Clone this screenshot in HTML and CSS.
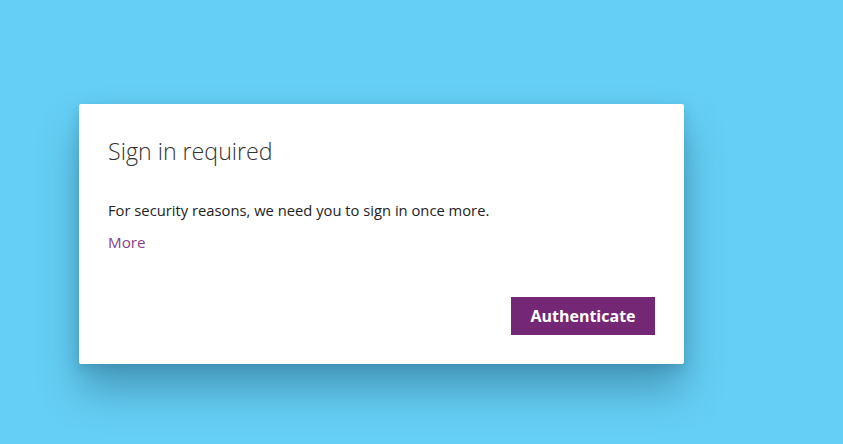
FILE: index.html
```html
<!DOCTYPE html>
<html lang="en">
<head>
<meta charset="utf-8">
<title>Sign in required</title>
<link rel="stylesheet" href="styles.css">
</head>
<body>
<div class="stage">
  <div class="dialog" role="dialog" aria-labelledby="dlg-title">
    <h1 class="dialog-title" id="dlg-title">Sign in required</h1>
    <p class="dialog-text">For security reasons, we need you to sign in once more.</p>
    <a class="dialog-link" href="#">More</a>
    <div class="dialog-actions">
      <button class="btn-primary" type="button">Authenticate</button>
    </div>
  </div>
</div>
</body>
</html>
```

FILE: styles.css
```css
html, body {
  margin: 0;
  padding: 0;
  height: 100%;
}
body {
  background: #66cff5;
  font-family: "Open Sans", "Noto Sans", sans-serif;
  overflow: hidden;
}
.stage {
  padding: 104px 0 0 79px;
}
.dialog {
  width: 605px;
  height: 260px;
  box-sizing: border-box;
  background: #ffffff;
  border-radius: 2px;
  padding: 31px 29px 0 29px;
  box-shadow: 0 26px 40px rgba(30, 90, 120, 0.45), 0 4px 12px rgba(30, 90, 120, 0.25);
  display: flex;
  flex-direction: column;
}
.dialog-title {
  margin: 0;
  font-size: 23.2px;
  line-height: 32px;
  font-weight: 300;
  color: #333333;
}
.dialog-text {
  margin: 33px 0 0 0;
  font-size: 14.75px;
  line-height: 20px;
  color: #222222;
}
.dialog-link {
  margin-top: 12px;
  font-size: 15.2px;
  line-height: 20px;
  color: #883d8a;
  text-decoration: none;
  align-self: flex-start;
}
.dialog-actions {
  display: flex;
  justify-content: flex-end;
  margin-top: 45px;
}
.btn-primary {
  width: 144px;
  height: 38px;
  border: none;
  border-radius: 0;
  background: #742774;
  color: #ffffff;
  font-family: "Open Sans", "Noto Sans", sans-serif;
  font-weight: 700;
  font-size: 16px;
  padding: 0;
}
```
